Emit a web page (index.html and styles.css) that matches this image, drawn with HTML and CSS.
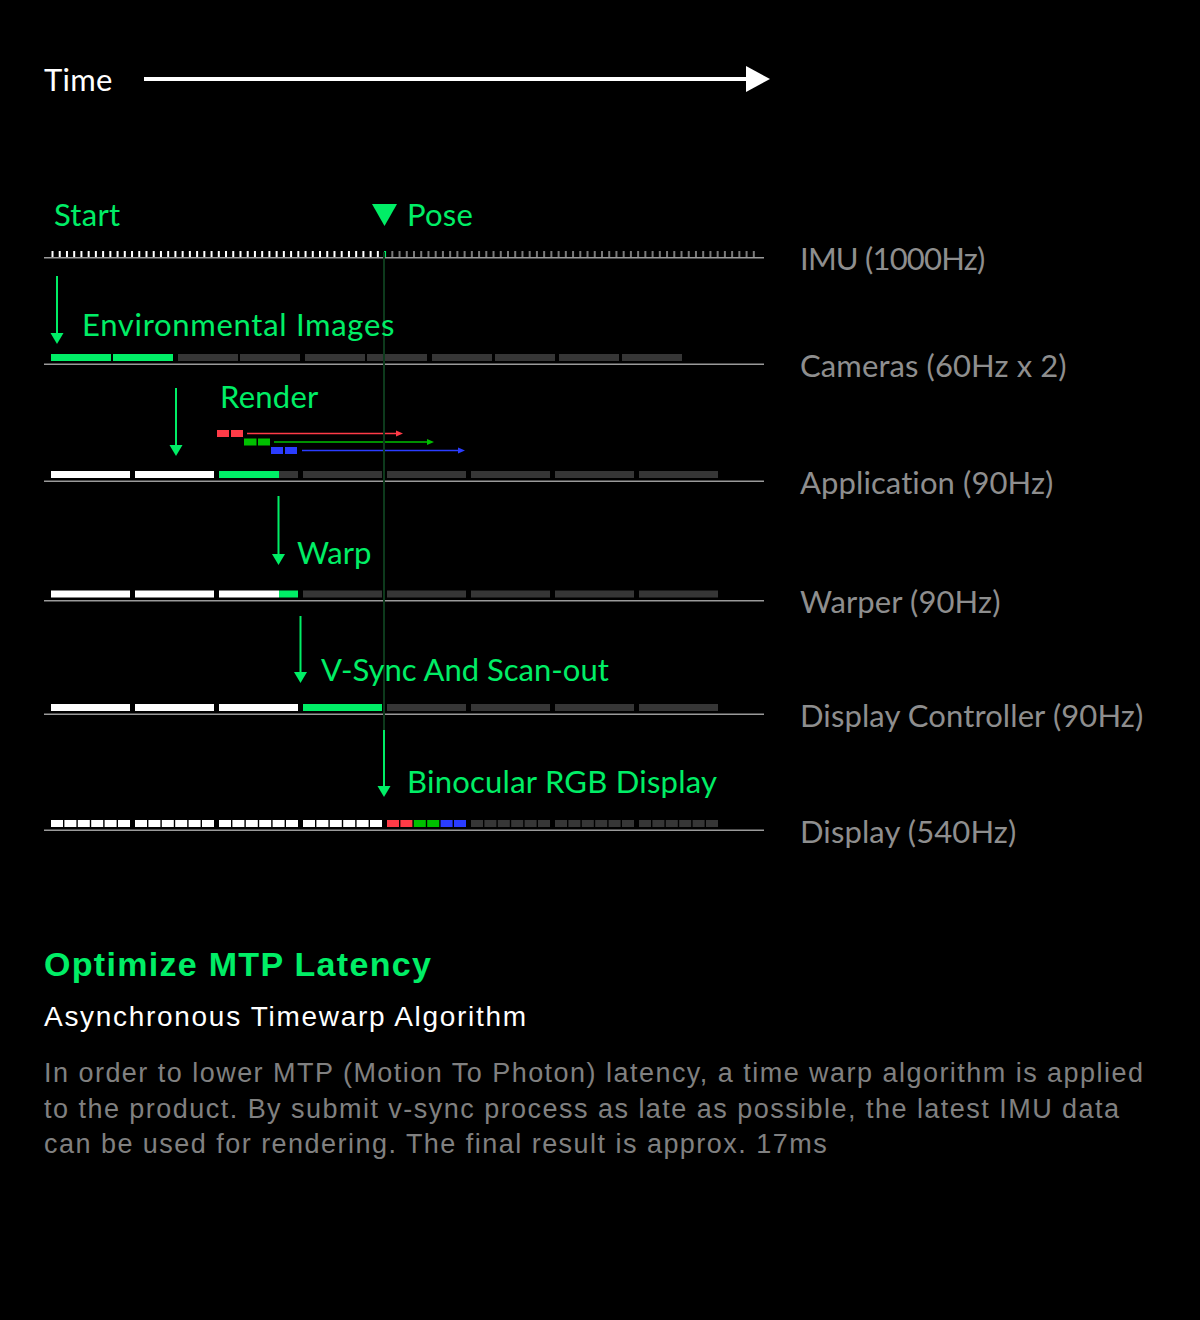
FILE: index.html
```html
<!DOCTYPE html>
<html lang="en">
<head>
<meta charset="utf-8">
<title>Optimize MTP Latency</title>
<link rel="stylesheet" href="styles.css">
</head>
<body>
<main class="page">
  <header class="time-row">
    <span class="time-label">Time</span>
    <svg class="time-arrow" width="626" height="28" viewBox="0 0 626 28" aria-hidden="true">
      <rect class="fill-white" x="0" y="12" width="604" height="4"/>
      <polygon class="fill-white" points="602,1 626,14 602,27"/>
    </svg>
  </header>

  <svg class="diagram" width="1200" height="680" viewBox="0 180 1200 680" role="img" aria-label="Timeline diagram">
    <!-- lane base lines -->
    <g class="lane-lines">
      <rect x="44" y="257" width="720" height="1.5"/>
      <rect x="44" y="363.5" width="720" height="1.5"/>
      <rect x="44" y="480.5" width="720" height="1.5"/>
      <rect x="44" y="600" width="720" height="1.5"/>
      <rect x="44" y="713.5" width="720" height="1.5"/>
      <rect x="44" y="829.5" width="720" height="1.5"/>
    </g>

    <!-- IMU ticks -->
    <g id="imu-ticks"></g>

    <!-- Cameras -->
    <g class="bars">
      <rect class="fill-green" x="51" y="354" width="60" height="7"/>
      <rect class="fill-green" x="113" y="354" width="60" height="7"/>
      <rect class="fill-dark" x="178" y="354" width="60" height="7"/>
      <rect class="fill-dark" x="240" y="354" width="60" height="7"/>
      <rect class="fill-dark" x="305" y="354" width="60" height="7"/>
      <rect class="fill-dark" x="367" y="354" width="60" height="7"/>
      <rect class="fill-dark" x="432" y="354" width="60" height="7"/>
      <rect class="fill-dark" x="495" y="354" width="60" height="7"/>
      <rect class="fill-dark" x="559" y="354" width="60" height="7"/>
      <rect class="fill-dark" x="622" y="354" width="60" height="7"/>
    </g>

    <!-- Application -->
    <g class="bars">
      <rect class="fill-white" x="51" y="471" width="79" height="7"/>
      <rect class="fill-white" x="135" y="471" width="79" height="7"/>
      <rect class="fill-dark" x="219" y="471" width="79" height="7"/>
      <rect class="fill-green" x="219" y="471" width="60" height="7"/>
      <rect class="fill-dark" x="303" y="471" width="79" height="7"/>
      <rect class="fill-dark" x="387" y="471" width="79" height="7"/>
      <rect class="fill-dark" x="471" y="471" width="79" height="7"/>
      <rect class="fill-dark" x="555" y="471" width="79" height="7"/>
      <rect class="fill-dark" x="639" y="471" width="79" height="7"/>
    </g>

    <!-- Render frames -->
    <g class="render">
      <rect class="fill-red" x="217" y="430" width="12" height="7"/>
      <rect class="fill-red" x="231" y="430" width="12" height="7"/>
      <line class="stroke-red" x1="247" y1="433.5" x2="397" y2="433.5"/>
      <polygon class="fill-red" points="396,430.5 403,433.5 396,436.5"/>

      <rect class="fill-rgreen" x="244" y="438.5" width="12.5" height="7"/>
      <rect class="fill-rgreen" x="258" y="438.5" width="12" height="7"/>
      <line class="stroke-rgreen" x1="274" y1="442" x2="428" y2="442"/>
      <polygon class="fill-rgreen" points="427,439 434,442 427,445"/>

      <rect class="fill-blue" x="271" y="447" width="12" height="7"/>
      <rect class="fill-blue" x="285" y="447" width="12" height="7"/>
      <line class="stroke-blue" x1="302" y1="450.5" x2="459" y2="450.5"/>
      <polygon class="fill-blue" points="458,447.5 465,450.5 458,453.5"/>
    </g>

    <!-- Warper -->
    <g class="bars">
      <rect class="fill-white" x="51" y="590.5" width="79" height="7"/>
      <rect class="fill-white" x="135" y="590.5" width="79" height="7"/>
      <rect class="fill-white" x="219" y="590.5" width="60" height="7"/>
      <rect class="fill-green" x="279" y="590.5" width="19" height="7"/>
      <rect class="fill-dark" x="303" y="590.5" width="79" height="7"/>
      <rect class="fill-dark" x="387" y="590.5" width="79" height="7"/>
      <rect class="fill-dark" x="471" y="590.5" width="79" height="7"/>
      <rect class="fill-dark" x="555" y="590.5" width="79" height="7"/>
      <rect class="fill-dark" x="639" y="590.5" width="79" height="7"/>
    </g>

    <!-- Display controller -->
    <g class="bars">
      <rect class="fill-white" x="51" y="704" width="79" height="7"/>
      <rect class="fill-white" x="135" y="704" width="79" height="7"/>
      <rect class="fill-white" x="219" y="704" width="79" height="7"/>
      <rect class="fill-green" x="303" y="704" width="79" height="7"/>
      <rect class="fill-dark" x="387" y="704" width="79" height="7"/>
      <rect class="fill-dark" x="471" y="704" width="79" height="7"/>
      <rect class="fill-dark" x="555" y="704" width="79" height="7"/>
      <rect class="fill-dark" x="639" y="704" width="79" height="7"/>
    </g>

    <!-- Display squares -->
    <g id="display-squares"></g>

    <!-- Pose marker line -->
    <rect class="fill-pose" x="383" y="252" width="2" height="478"/>

    <!-- Green arrows -->
    <g class="arrows">
      <line class="stroke-green" x1="57" y1="276" x2="57" y2="336"/>
      <polygon class="fill-green" points="50.5,333 63.5,333 57,344"/>
      <line class="stroke-green" x1="176" y1="388" x2="176" y2="448"/>
      <polygon class="fill-green" points="169.5,445 182.5,445 176,456"/>
      <line class="stroke-green" x1="278.5" y1="496" x2="278.5" y2="557"/>
      <polygon class="fill-green" points="272,554 285,554 278.5,565"/>
      <line class="stroke-green" x1="300.5" y1="616" x2="300.5" y2="675"/>
      <polygon class="fill-green" points="294,672 307,672 300.5,683"/>
      <line class="stroke-green" x1="384" y1="730" x2="384" y2="789"/>
      <polygon class="fill-green" points="377.5,786 390.5,786 384,797"/>
      <polygon class="fill-green" points="372,204 397,204 384.5,226"/>
    </g>

    <!-- Annotations -->
    <g class="notes">
      <text x="54" y="226">Start</text>
      <text x="407" y="226">Pose</text>
      <text class="wide" x="82" y="336">Environmental Images</text>
      <text x="220" y="408">Render</text>
      <text class="tight" x="297" y="564">Warp</text>
      <text class="tight" x="321" y="681">V-Sync And Scan-out</text>
      <text x="407" y="793">Binocular RGB Display</text>
    </g>

    <!-- Lane labels -->
    <g class="lanes">
      <text class="tight" x="800" y="270">IMU (1000Hz)</text>
      <text x="800" y="376.5">Cameras (60Hz x 2)</text>
      <text x="800" y="493.5">Application (90Hz)</text>
      <text x="800" y="612.5">Warper (90Hz)</text>
      <text x="800" y="726.5">Display Controller (90Hz)</text>
      <text x="800" y="842.5">Display (540Hz)</text>
    </g>
  </svg>

  <section class="copy">
    <h1 class="copy-title">Optimize MTP Latency</h1>
    <h2 class="copy-subtitle">Asynchronous Timewarp Algorithm</h2>
    <p class="copy-body">In order to lower MTP (Motion To Photon) latency, a time warp algorithm is applied to the product. By submit v-sync process as late as possible, the latest IMU data can be used for rendering. The final result is approx. 17ms</p>
  </section>
</main>
<script src="script.js"></script>
</body>
</html>
```

FILE: styles.css
```css
* {
  box-sizing: border-box;
}

html,
body {
  margin: 0;
  padding: 0;
  background: #000;
}

body {
  width: 1200px;
  min-height: 1320px;
  font-family: "Lato", "Liberation Sans", sans-serif;
}

.page {
  display: flex;
  flex-direction: column;
}

.time-row {
  display: flex;
  align-items: center;
  height: 28px;
  margin-top: 65px;
  padding-left: 44px;
}

.time-label {
  width: 100px;
  flex: none;
  color: #fff;
  font-size: 31px;
  line-height: 28px;
  letter-spacing: 0.3px;
}

.time-arrow {
  display: block;
  flex: none;
}

.diagram {
  display: block;
  margin-top: 87px;
}

.fill-white { fill: #ffffff; }
.fill-green { fill: #00ee66; }
.fill-dark { fill: #363636; }
.fill-gray { fill: #7a7a7a; }
.fill-red { fill: #ff3b47; }
.fill-rgreen { fill: #00c000; }
.fill-blue { fill: #2a3cff; }
.fill-pose { fill: #0d3a1c; }

.lane-lines rect { fill: #9a9a9a; }

.stroke-green { stroke: #00ee66; stroke-width: 2; }
.stroke-red { stroke: #ff3b47; stroke-width: 1.3; }
.stroke-rgreen { stroke: #00c000; stroke-width: 1.3; }
.stroke-blue { stroke: #2a3cff; stroke-width: 1.3; }

.notes text {
  fill: #00ee66;
  font-family: "Lato", "Liberation Sans", sans-serif;
  font-size: 31px;
  letter-spacing: 0.25px;
}

.notes text.wide {
  letter-spacing: 0.7px;
}

.notes text.tight,
.lanes text.tight {
  letter-spacing: 0;
}

.lanes text {
  fill: #8e8e8e;
  font-family: "Lato", "Liberation Sans", sans-serif;
  font-size: 31px;
  letter-spacing: 0.1px;
}

.lanes text.tight {
  letter-spacing: -0.8px;
}

.copy {
  display: flex;
  flex-direction: column;
  padding: 0 44px;
  margin-top: 84px;
  font-family: "Liberation Sans", Arial, sans-serif;
}

.copy-title {
  margin: 0;
  color: #00ee66;
  font-size: 34px;
  line-height: 40px;
  font-weight: 700;
  letter-spacing: 1.3px;
}

.copy-subtitle {
  margin: 16px 0 0;
  color: #fff;
  font-size: 28px;
  line-height: 34px;
  font-weight: 400;
  letter-spacing: 1.7px;
}

.copy-body {
  margin: 22px 0 0;
  max-width: 1112px;
  color: #808080;
  font-size: 27px;
  line-height: 35.5px;
  letter-spacing: 1.47px;
}
```

FILE: script.js
```js
(function () {
  var NS = "http://www.w3.org/2000/svg";

  function rect(parent, x, y, w, h, cls) {
    var r = document.createElementNS(NS, "rect");
    r.setAttribute("x", x);
    r.setAttribute("y", y);
    r.setAttribute("width", w);
    r.setAttribute("height", h);
    r.setAttribute("class", cls);
    parent.appendChild(r);
  }

  // IMU ticks: 98 samples, pose at sample 46
  var ticks = document.getElementById("imu-ticks");
  for (var i = 0; i < 98; i++) {
    var cls = i < 46 ? "fill-white" : (i === 46 ? "fill-green" : "fill-gray");
    rect(ticks, (51.5 + i * 7.23).toFixed(2), 251, 2, 6, cls);
  }

  // Display: 8 frames x 6 sub-frames
  var disp = document.getElementById("display-squares");
  var rgb = ["fill-red", "fill-red", "fill-rgreen", "fill-rgreen", "fill-blue", "fill-blue"];
  for (var f = 0; f < 8; f++) {
    for (var s = 0; s < 6; s++) {
      var c = f < 4 ? "fill-white" : (f === 4 ? rgb[s] : "fill-dark");
      rect(disp, (51 + f * 84 + s * 13.4).toFixed(2), 820, 12, 7, c);
    }
  }
})();
```
